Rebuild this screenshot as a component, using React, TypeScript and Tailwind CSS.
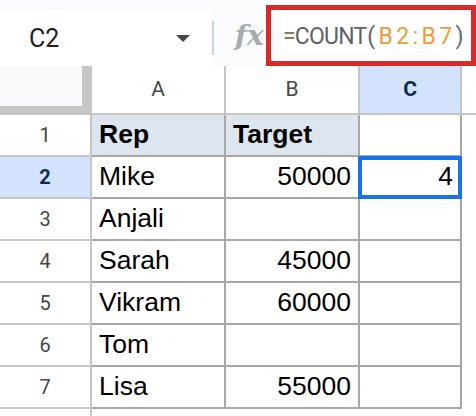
import React from "react";

const rows: { n: number; a: string; b: string; c: string }[] = [
  { n: 1, a: "Rep", b: "Target", c: "" },
  { n: 2, a: "Mike", b: "50000", c: "4" },
  { n: 3, a: "Anjali", b: "", c: "" },
  { n: 4, a: "Sarah", b: "45000", c: "" },
  { n: 5, a: "Vikram", b: "60000", c: "" },
  { n: 6, a: "Tom", b: "", c: "" },
  { n: 7, a: "Lisa", b: "55000", c: "" },
];

export default function App() {
  return (
    <div className="relative w-[476px] h-[416px] overflow-hidden bg-white" style={{ fontFamily: "Roboto, 'Liberation Sans', sans-serif" }}>
      {/* Toolbar */}
      <div className="flex h-[66px] bg-[#f9fbfd] pt-[10px]">
        <div className="flex h-full w-[212px] items-center bg-white">
          <span className="ml-[29px] text-[25px] leading-none text-[#1f1f1f]">C2</span>
          <span className="ml-auto mr-[22px] h-0 w-0 border-x-[7px] border-t-[7px] border-x-transparent border-t-[#444746]" />
        </div>
        <div className="h-[34px] w-[2px] self-center bg-[#c8d4e0]" />
        <div className="flex w-[67px] items-center pl-[21px] pb-[4px]">
          <span className="text-[28px] italic font-bold leading-none text-[#a8abae]" style={{ fontFamily: "'DejaVu Serif', serif" }}>fx</span>
        </div>
        <div className="mt-[4px] flex flex-1 items-center bg-white pl-[2px] pb-[8px]">
          <span className="whitespace-nowrap text-[23px] leading-none tracking-[-0.8px] text-[#5f6368]" style={{ fontFamily: "Roboto, sans-serif" }}>
            <span className="text-[#8a7a5a]">=</span>COUNT<span className="ml-[1px]">(</span>
            <span className="ml-[4px] tracking-[3.4px] text-[#f29a38]">B2:B7</span>
            <span className="text-[#5b6b80]">)</span>
          </span>
        </div>
      </div>

      {/* Column header row */}
      <div className="flex h-[49px]">
        <div className="h-full w-[92px] border-r-2 border-[#c4c7c5]">
          <div className="h-full w-full border-b-[9px] border-r-[8px] border-[#c6c6c6] bg-[#f8f9fa]" />
        </div>
        <div className="flex h-full w-[134px] items-center justify-center border-b-2 border-r-2 border-[#c4c7c5] text-[21px] text-[#444746]">A</div>
        <div className="flex h-full w-[134px] items-center justify-center border-b-2 border-r-2 border-[#c4c7c5] text-[21px] text-[#444746]">B</div>
        <div className="flex h-full w-[102px] items-center justify-center border-b-2 border-r-2 border-[#c4c7c5] bg-[#d3e3fd] text-[21px] font-bold text-[#0b2a5c]">C</div>
        <div className="h-full flex-1 border-b-2 border-[#c4c7c5]" />
      </div>

      {/* Data rows */}
      {rows.map((r) => {
        const header = r.n === 1;
        const selRow = r.n === 2;
        return (
          <div key={r.n} className="flex h-[42px]" style={{ fontFamily: "'Liberation Sans', Arial, sans-serif" }}>
            <div
              className={
                selRow
                  ? "flex h-full w-[92px] items-center justify-center border-b-2 border-r-2 border-[#c4c7c5] bg-[#d3e3fd] text-[20px] font-bold text-[#0b2a5c]"
                  : "flex h-full w-[92px] items-center justify-center border-b-2 border-r-2 border-[#c4c7c5] text-[20px] text-[#444746]"
              }
              style={{ fontFamily: "Roboto, sans-serif" }}
            >
              {r.n}
            </div>
            <div
              className={
                header
                  ? "flex h-full w-[134px] items-center border-b-2 border-r-2 border-[#a8a8a8] bg-[#dde6ef] pl-[7px] text-[26.5px] font-bold text-black"
                  : "flex h-full w-[134px] items-center border-b-2 border-r-2 border-[#a8a8a8] pl-[7px] text-[26.5px] text-black"
              }
            >
              {r.a}
            </div>
            <div
              className={
                header
                  ? "flex h-full w-[134px] items-center border-b-2 border-r-2 border-[#a8a8a8] bg-[#dde6ef] pl-[7px] text-[26.5px] font-bold text-black"
                  : "flex h-full w-[134px] items-center justify-end border-b-2 border-r-2 border-[#a8a8a8] pr-[7px] text-[26.5px] text-black"
              }
            >
              {r.b}
            </div>
            <div className="relative flex h-full w-[102px] items-center justify-end border-b-2 border-r-2 border-[#a8a8a8] pr-[7px] text-[26.5px] text-black">
              {r.c}
              {selRow && <div className="pointer-events-none absolute -left-[2px] -top-[1px] -right-[2px] -bottom-[2px] border-[4px] border-[#1a73e8]" />}
            </div>
          </div>
        );
      })}

      <div className="h-[7px] w-[92px] border-r-2 border-[#c4c7c5]" />

      {/* Annotation box */}
      <div className="pointer-events-none absolute left-[266px] top-[5px] h-[61px] w-[210px] border-[5px] border-[#d92a2a]" />
    </div>
  );
}
